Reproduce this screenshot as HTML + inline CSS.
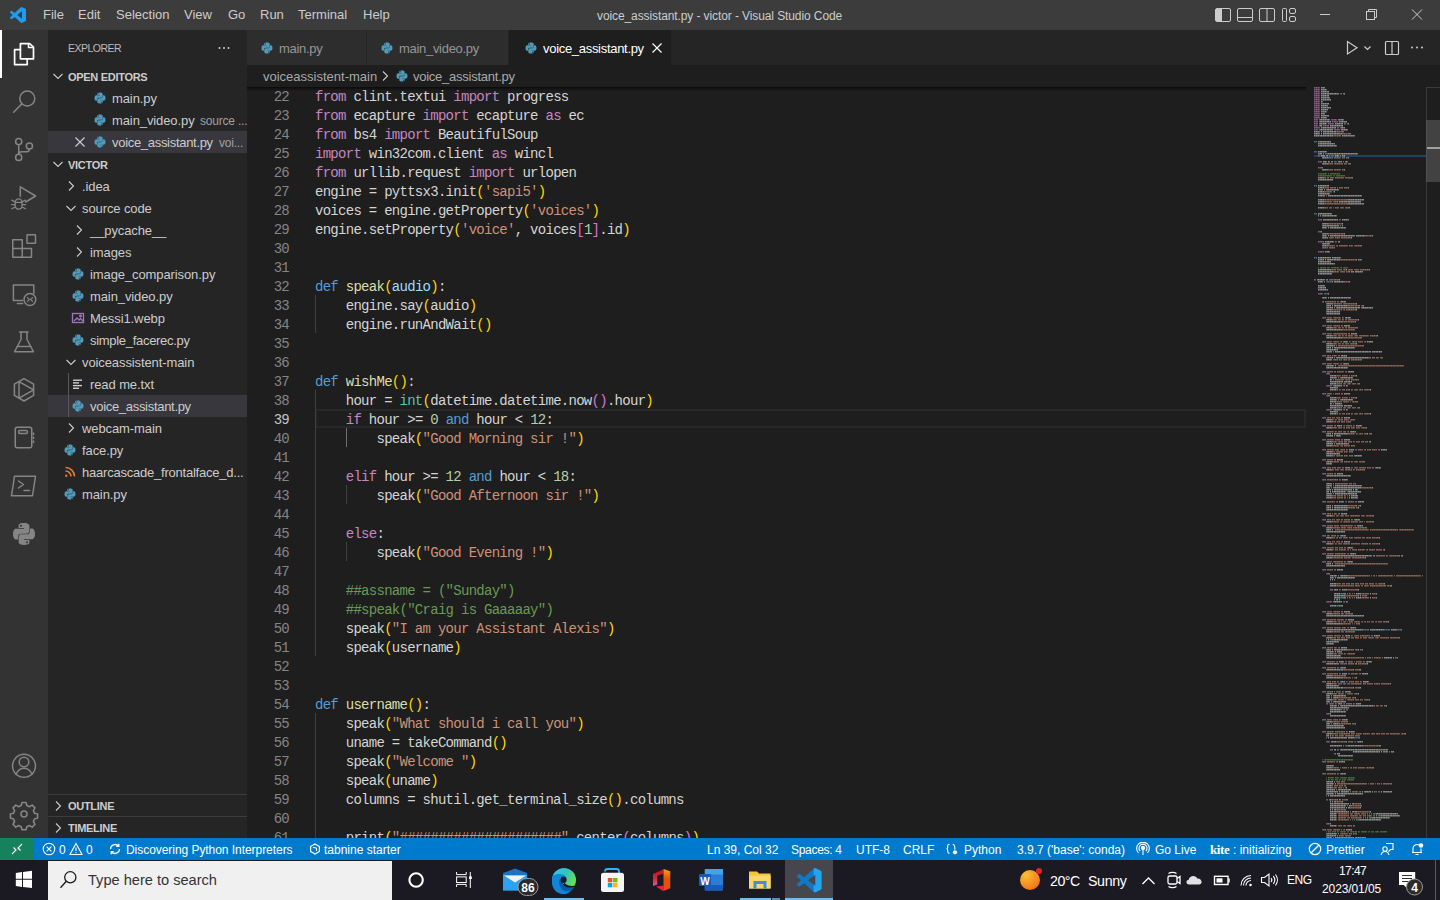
<!DOCTYPE html>
<html><head><meta charset="utf-8">
<style>
*{margin:0;padding:0;box-sizing:border-box}
html,body{width:1440px;height:900px;overflow:hidden;background:#1e1e1e;font-family:"Liberation Sans",sans-serif;color:#cccccc}
.abs{position:absolute}
#title{left:0;top:0;width:1440px;height:30px;background:#3c3c3c}
.menu{position:absolute;top:0;height:30px;line-height:30px;font-size:13px;color:#cccccc}
#act{left:0;top:30px;width:48px;height:808px;background:#333333}
#side{left:48px;top:30px;width:199px;height:808px;background:#252526}
#tabs{left:247px;top:30px;width:1193px;height:35px;background:#252526}
.tab{position:absolute;top:0;height:35px;letter-spacing:-0.3px;background:#2d2d2d;border-right:1px solid #252526;font-size:13px;line-height:35px;color:#969696}
#crumb{left:247px;top:65px;width:1193px;height:22px;background:#1e1e1e;font-size:13px;line-height:22px;color:#a9a9a9}
#editor{left:247px;top:87px;width:1193px;height:751px;background:#1e1e1e;overflow:hidden}
#status{left:0;top:838px;width:1440px;height:22px;background:#007acc;color:#fff;font-size:12px;line-height:22px}
#taskbar{left:0;top:860px;width:1440px;height:40px;background:#1b1a23}
.sb{position:absolute;top:0;height:22px;white-space:nowrap}
.row{position:absolute;left:0;width:199px;height:22px;line-height:22px;font-size:13px;white-space:nowrap;letter-spacing:-0.1px}
.code{position:absolute;margin-top:1.5px;left:68px;height:19px;line-height:19px;font-family:"Liberation Mono",monospace;font-size:14px;letter-spacing:-0.72px;white-space:pre;color:#d4d4d4}
.ln{position:absolute;margin-top:1.5px;left:0;width:42px;text-align:right;height:19px;line-height:19px;font-family:"Liberation Mono",monospace;font-size:14px;letter-spacing:-0.72px;color:#858585}
.k{color:#c586c0}.d{color:#569cd6}.f{color:#dcdcaa}.p{color:#9cdcfe}.s{color:#ce9178}.n{color:#b5cea8}.t{color:#4ec9b0}.b1{color:#ffd700}.b2{color:#da70d6}.c{color:#6a9955}
</style></head><body>
<div id="title" class="abs">
<svg class="abs" style="left:10px;top:7px" width="16" height="16" viewBox="0 0 100 100"><path fill="#1f9cf0" d="M96.46 10.8L75.86.87a6.23 6.23 0 0 0-7.1 1.2L29.35 38.04 12.19 25.01a4.16 4.16 0 0 0-5.320.24L1.36 30.26a4.16 4.16 0 0 0 0 6.16L16.25 50 1.36 63.58a4.16 4.16 0 0 0 0 6.16l5.51 5a4.16 4.16 0 0 0 5.32.24l17.16-13.02 39.41 35.96a6.23 6.23 0 0 0 7.1 1.2l20.6-9.92A6.24 6.24 0 0 0 100 83.6V16.4a6.24 6.24 0 0 0-3.54-5.6zM75.02 72.7L45.11 50l29.9-22.7z"/></svg>
<div class="menu" style="left:43px">File</div>
<div class="menu" style="left:78px">Edit</div>
<div class="menu" style="left:116px">Selection</div>
<div class="menu" style="left:184px">View</div>
<div class="menu" style="left:228px">Go</div>
<div class="menu" style="left:260px">Run</div>
<div class="menu" style="left:298px">Terminal</div>
<div class="menu" style="left:363px">Help</div>
<div class="menu" style="left:597px;top:1px;font-size:12px;letter-spacing:-0.1px">voice_assistant.py - victor - Visual Studio Code</div>
<svg class="abs" style="left:1200px;top:0" width="240" height="30" viewBox="1200 0 240 30" fill="none" stroke="#cccccc" stroke-width="1">
<rect x="1215.5" y="8.5" width="15" height="13" rx="1.5"/><rect x="1216" y="9" width="6" height="12" fill="#cccccc" stroke="none"/>
<rect x="1237.5" y="8.5" width="15" height="13" rx="1.5"/><line x1="1238" y1="17.5" x2="1252" y2="17.5"/>
<rect x="1259.5" y="8.5" width="15" height="13" rx="1.5"/><line x1="1267" y1="9" x2="1267" y2="21"/>
<rect x="1282.5" y="8.5" width="4" height="13" rx="1"/><rect x="1289.5" y="8.5" width="6" height="5" rx="1.5"/><rect x="1289.5" y="16.5" width="6" height="5" rx="1.5"/>
<line x1="1320" y1="14.5" x2="1330" y2="14.5"/>
<rect x="1366.5" y="11.5" width="8" height="8"/><path d="M1368.5 11.5V9.5h8v8h-2"/>
<path d="M1412 9.5l10 10M1422 9.5l-10 10"/>
</svg>
</div>
<div id="act" class="abs">
<div class="abs" style="left:0;top:0;width:2px;height:48px;background:#ffffff"></div>
<svg class="abs" style="left:0;top:0" width="48" height="808" viewBox="0 30 48 808" fill="none" stroke="#858585" stroke-width="1.5" stroke-linejoin="round" stroke-linecap="round">
<g stroke="#ffffff">
<path stroke-width="1.7" d="M20.4 43.6h9.2l3.9 3.6v11.6h-13.1z"/><path stroke-width="1.5" d="M28.5 43.8v3.6h4.6"/>
<path stroke-width="1.7" d="M20.4 49.6h-5.8v15h12.6v-5.8"/>
</g>
<circle cx="27.3" cy="98.5" r="7.5"/><path d="M21.9 103.9L13.6 112.2"/>
<circle cx="18.7" cy="141.6" r="3.1"/><circle cx="29.4" cy="146" r="3.1"/><circle cx="18.7" cy="157.4" r="3.1"/>
<path d="M18.7 144.7V154.3M29.4 149.1c0 1.6-1 2.6-2.6 2.6h-5c-1.6 0-3.1 1.1-3.1 2.6"/>
<path d="M20.3 186.8L35.6 196L25.6 202M20.3 186.8v9.4"/>
<path stroke-width="1.3" d="M15 202.4h7.2M15.2 202.4a3.4 3.6 0 0 1 6.8 0v3.4a3.4 3.4 0 0 1-6.8 0z M11.8 200.2l3.2 1.6M25.4 200.2l-3.2 1.6M11.6 204.6h3.6M25.6 204.6h-3.6M11.8 208.8l3.2-1.8M25.4 208.8l-3.2-1.8"/>
<path d="M12.75 239.75h9.5v8.75h9.25v8.75h-18.75zM12.75 248.5h9.5v8.75"/>
<rect x="27" y="234.75" width="8.5" height="8.5" rx="0.5"/>
<path d="M22.5 300.4H13.4v-15.4h20.4v8.2"/><path d="M17.4 303.6h5.2"/>
<circle cx="29.9" cy="299.5" r="5.9"/><path stroke-width="1.2" d="M27.4 297.6l2 1.9-2 1.9M32.6 297.6l-2 1.9 2 1.9"/>
<path d="M19.5 331.9h8.5M21 332v7.5l-6.5 12.25h19l-6.5-12.25V332M17 346.5h14"/>
<path d="M24 378.6l9.6 5.6v11.2l-9.6 5.6-9.6-5.6v-11.2z"/><path d="M19 381.6v16.6l14.6-8.4z"/>
<rect x="15.25" y="427.25" width="16.5" height="20.5" rx="2"/><rect x="18.5" y="430.5" width="9" height="3" rx="1.5"/><path d="M33.5 433v1.5M33.5 437v1.5M33.5 441v1.5"/>
<path d="M14.5 476.25h21l-3 19.5h-21z"/><path d="M18.5 481l5 3.5-5 3.5M24 490.5h5.5"/>
<circle cx="24" cy="765.8" r="11.5"/><circle cx="24" cy="762" r="4.8"/><path d="M16 774.5c1.5-4 4.5-6.3 8-6.3s6.5 2.3 8 6.3"/>
<path stroke-width="1.6" d="M22 802.5h4l.8 3 2.6 1.2 2.8-1.6 2.8 2.8-1.6 2.8 1.2 2.6 3 .8v4l-3 .8-1.2 2.6 1.6 2.8-2.8 2.8-2.8-1.6-2.6 1.2-.8 3h-4l-.8-3-2.6-1.2-2.8 1.6-2.8-2.8 1.6-2.8-1.2-2.6-3-.8v-4l3-.8 1.2-2.6-1.6-2.8 2.8-2.8 2.8 1.6 2.6-1.2z"/>
<circle cx="24" cy="814" r="3"/>
</svg>
<svg class="abs" style="left:12px;top:492px" width="24" height="24" viewBox="0 0 24 24"><path fill="#858585" d="M11.9 1c-5.6 0-5.3 2.4-5.3 2.4v2.5h5.4v.8H4.5S1 6.3 1 12s3.1 5.5 3.1 5.5H6v-2.7s-.1-3.1 3.1-3.1h5.3s3 0 3-2.9V3.9S17.8 1 11.9 1zM9 2.7a1 1 0 1 1 0 2 1 1 0 0 1 0-2z M12.1 23c5.6 0 5.3-2.4 5.3-2.4v-2.5H12v-.8h7.5s3.5.4 3.5-5.3-3.1-5.5-3.1-5.5H18v2.7s.1 3.1-3.1 3.1H9.6s-3 0-3 2.9v4.9S6.2 23 12.1 23zm2.9-1.7a1 1 0 1 1 0-2 1 1 0 0 1 0 2z"/></svg>
</div>
<svg width="0" height="0" style="position:absolute">
<defs>
<symbol id="py" viewBox="0 0 24 24"><path fill="#519aba" d="M11.9 1c-5.6 0-5.3 2.4-5.3 2.4v2.5h5.4v.8H4.5S1 6.3 1 12s3.1 5.5 3.1 5.5H6v-2.7s-.1-3.1 3.1-3.1h5.3s3 0 3-2.9V3.9S17.8 1 11.9 1zM9 2.7a1 1 0 1 1 0 2 1 1 0 0 1 0-2z M12.1 23c5.6 0 5.3-2.4 5.3-2.4v-2.5H12v-.8h7.5s3.5.4 3.5-5.3-3.1-5.5-3.1-5.5H18v2.7s.1 3.1-3.1 3.1H9.6s-3 0-3 2.9v4.9S6.2 23 12.1 23zm2.9-1.7a1 1 0 1 1 0-2 1 1 0 0 1 0 2z"/></symbol>
<symbol id="chr" viewBox="0 0 16 16"><path fill="none" stroke="#cccccc" stroke-width="1.1" d="M6 3.5l4.5 4.5L6 12.5"/></symbol>
<symbol id="chd" viewBox="0 0 16 16"><path fill="none" stroke="#cccccc" stroke-width="1.1" d="M3.5 6l4.5 4.5L12.5 6"/></symbol>
</defs></svg>
<div id="side" class="abs"><div class="abs" style="left:20px;top:1px;height:35px;line-height:35px;font-size:10.5px;color:#bbbbbb;letter-spacing:-0.5px">EXPLORER</div>
<svg class="abs" style="left:168px;top:10px" width="16" height="16" viewBox="0 0 16 16" fill="#cccccc"><circle cx="3.5" cy="8" r="1"/><circle cx="8" cy="8" r="1"/><circle cx="12.5" cy="8" r="1"/></svg>
<div class="row" style="top:35px;"><svg class="abs" style="left:2px;top:3px" width="16" height="16"><use href="#chd"/></svg><span class="abs" style="top:1px;left:20px;font-weight:bold;font-size:11px;letter-spacing:-0.3px;">OPEN EDITORS</span></div>
<div class="row" style="top:57px;"><svg class="abs" style="left:45.5px;top:5px" width="12" height="12"><use href="#py"/></svg><span class="abs" style="top:1px;left:64px;">main.py</span></div>
<div class="row" style="top:79px;"><svg class="abs" style="left:45.5px;top:5px" width="12" height="12"><use href="#py"/></svg><span class="abs" style="top:1px;left:64px;">main_video.py</span><span class="abs" style="top:1px;left:152px;font-size:12px;color:#a0a0a0;letter-spacing:-0.2px">source ...</span></div>
<div class="row" style="top:101px;background:#37373d;"><svg class="abs" style="left:45.5px;top:5px" width="12" height="12"><use href="#py"/></svg><svg class="abs" style="left:26px;top:5px" width="12" height="12" viewBox="0 0 12 12"><path d="M1.5 1.5l9 9M10.5 1.5l-9 9" stroke="#cccccc" stroke-width="1.2"/></svg><span class="abs" style="top:1px;left:64px;letter-spacing:-0.3px">voice_assistant.py</span><span class="abs" style="top:1px;left:171px;font-size:12px;color:#a0a0a0;letter-spacing:-0.2px">voi...</span></div>
<div class="row" style="top:123px;"><svg class="abs" style="left:2px;top:3px" width="16" height="16"><use href="#chd"/></svg><span class="abs" style="top:1px;left:20px;font-weight:bold;font-size:11px;letter-spacing:-0.3px;">VICTOR</span></div>
<div class="row" style="top:145px;"><svg class="abs" style="left:15px;top:3px" width="16" height="16"><use href="#chr"/></svg><span class="abs" style="top:1px;left:34px;">.idea</span></div>
<div class="row" style="top:167px;"><svg class="abs" style="left:15px;top:3px" width="16" height="16"><use href="#chd"/></svg><span class="abs" style="top:1px;left:34px;">source code</span></div>
<div class="row" style="top:189px;"><svg class="abs" style="left:23px;top:3px" width="16" height="16"><use href="#chr"/></svg><span class="abs" style="top:1px;left:42px;">__pycache__</span></div>
<div class="row" style="top:211px;"><svg class="abs" style="left:23px;top:3px" width="16" height="16"><use href="#chr"/></svg><span class="abs" style="top:1px;left:42px;">images</span></div>
<div class="row" style="top:233px;"><svg class="abs" style="left:24px;top:5px" width="12" height="12"><use href="#py"/></svg><span class="abs" style="top:1px;left:42px;">image_comparison.py</span></div>
<div class="row" style="top:255px;"><svg class="abs" style="left:24px;top:5px" width="12" height="12"><use href="#py"/></svg><span class="abs" style="top:1px;left:42px;">main_video.py</span></div>
<div class="row" style="top:277px;"><svg class="abs" style="left:23px;top:4px" width="14" height="14" viewBox="0 0 14 14" fill="none" stroke="#a074c4" stroke-width="1.3"><rect x="1.5" y="2.5" width="11" height="9"/><path d="M3 10l3-3 2 2 1.5-1.5L12 10" /><circle cx="9.5" cy="5" r="0.8" fill="#a074c4"/></svg><span class="abs" style="top:1px;left:42px;">Messi1.webp</span></div>
<div class="row" style="top:299px;"><svg class="abs" style="left:24px;top:5px" width="12" height="12"><use href="#py"/></svg><span class="abs" style="top:1px;left:42px;letter-spacing:-0.3px">simple_facerec.py</span></div>
<div class="row" style="top:321px;"><svg class="abs" style="left:15px;top:3px" width="16" height="16"><use href="#chd"/></svg><span class="abs" style="top:1px;left:34px;">voiceassistent-main</span></div>
<div class="row" style="top:343px;"><svg class="abs" style="left:24px;top:5px" width="12" height="12" viewBox="0 0 12 12" fill="#cccccc"><rect x="1" y="1.5" width="9" height="1.4"/><rect x="1" y="4.2" width="6" height="1.4"/><rect x="1" y="6.9" width="9" height="1.4"/><rect x="1" y="9.6" width="6" height="1.4"/></svg><span class="abs" style="top:1px;left:42px;">read me.txt</span></div>
<div class="row" style="top:365px;background:#37373d;"><svg class="abs" style="left:24px;top:5px" width="12" height="12"><use href="#py"/></svg><span class="abs" style="top:1px;left:42px;letter-spacing:-0.3px">voice_assistant.py</span></div>
<div class="row" style="top:387px;"><svg class="abs" style="left:15px;top:3px" width="16" height="16"><use href="#chr"/></svg><span class="abs" style="top:1px;left:34px;">webcam-main</span></div>
<div class="row" style="top:409px;"><svg class="abs" style="left:15.5px;top:5px" width="12" height="12"><use href="#py"/></svg><span class="abs" style="top:1px;left:34px;">face.py</span></div>
<div class="row" style="top:431px;"><svg class="abs" style="left:15.5px;top:5px" width="12" height="12" viewBox="0 0 12 12" fill="none" stroke="#e37933" stroke-width="1.6"><path d="M1.5 1.5a9 9 0 0 1 9 9M1.5 5a5.5 5.5 0 0 1 5.5 5.5"/><circle cx="2.3" cy="9.7" r="1.2" fill="#e37933" stroke="none"/></svg><span class="abs" style="top:1px;left:34px;letter-spacing:-0.22px">haarcascade_frontalface_d...</span></div>
<div class="row" style="top:453px;"><svg class="abs" style="left:15.5px;top:5px" width="12" height="12"><use href="#py"/></svg><span class="abs" style="top:1px;left:34px;">main.py</span></div>
<div class="abs" style="left:20px;top:343px;width:1px;height:44px;background:#585858"></div>
<div class="abs" style="left:0;top:764px;width:199px;height:1px;background:#3c3c3c"></div>
<div class="row" style="top:765px;height:21px;line-height:21px;"><svg class="abs" style="left:2px;top:3px" width="16" height="16"><use href="#chr"/></svg><span class="abs" style="top:1px;left:20px;font-weight:bold;font-size:11px;letter-spacing:-0.3px;">OUTLINE</span></div>
<div class="abs" style="left:0;top:786px;width:199px;height:1px;background:#3c3c3c"></div>
<div class="row" style="top:787px;height:21px;line-height:21px;"><svg class="abs" style="left:2px;top:3px" width="16" height="16"><use href="#chr"/></svg><span class="abs" style="top:1px;left:20px;font-weight:bold;font-size:11px;letter-spacing:-0.3px;">TIMELINE</span></div></div>
<div id="tabs" class="abs">
<div class="tab" style="left:0;width:120px"><svg class="abs" style="left:14px;top:12px" width="12" height="12"><use href="#py"/></svg><span class="abs" style="top:1px;left:32px">main.py</span></div>
<div class="tab" style="left:120px;width:142px"><svg class="abs" style="left:14px;top:12px" width="12" height="12"><use href="#py"/></svg><span class="abs" style="top:1px;left:32px">main_video.py</span></div>
<div class="tab" style="left:262px;width:162px;background:#1e1e1e;color:#ffffff;border-right:none"><svg class="abs" style="left:16px;top:12px" width="12" height="12"><use href="#py"/></svg><span class="abs" style="top:1px;left:34px">voice_assistant.py</span>
<svg class="abs" style="left:142px;top:12px" width="12" height="12" viewBox="0 0 12 12"><path d="M1.5 1.5l9 9M10.5 1.5l-9 9" stroke="#ffffff" stroke-width="1.2"/></svg></div>
<svg class="abs" style="left:1090px;top:0" width="103" height="35" viewBox="1337 30 103 35" fill="none" stroke="#cccccc" stroke-width="1.2">
<path d="M1347.5 41.5v12.5l9.5-6.25z"/><path d="M1364.5 46.5l3 3 3-3"/>
<rect x="1385.5" y="41.5" width="13" height="13" rx="1"/><path d="M1392 41.5v13"/>
<g fill="#cccccc" stroke="none"><circle cx="1412" cy="47.5" r="1"/><circle cx="1417" cy="47.5" r="1"/><circle cx="1422" cy="47.5" r="1"/></g>
</svg>
</div>
<div id="crumb" class="abs"><span class="abs" style="top:1px;left:16px">voiceassistent-main</span>
<svg class="abs" style="left:130px;top:3px" width="16" height="16"><use href="#chr"/></svg>
<svg class="abs" style="left:149px;top:5px" width="12" height="12"><use href="#py"/></svg>
<span class="abs" style="top:1px;left:166px;letter-spacing:-0.25px">voice_assistant.py</span></div>
<div id="editor" class="abs">
<div class="abs" style="left:68px;top:322px;width:991px;height:19px;border:2px solid #282828"></div>
<div class="abs" style="left:68px;top:208px;width:1px;height:38px;background:#404040"></div>
<div class="abs" style="left:68px;top:303px;width:1px;height:266px;background:#404040"></div>
<div class="abs" style="left:99px;top:341px;width:1px;height:19px;background:#707070"></div>
<div class="abs" style="left:99px;top:398px;width:1px;height:19px;background:#404040"></div>
<div class="abs" style="left:99px;top:455px;width:1px;height:19px;background:#404040"></div>
<div class="abs" style="left:68px;top:626px;width:1px;height:133px;background:#404040"></div>
<div class="ln" style="top:-1px;color:#858585">22</div>
<div class="code" style="top:-1px"><span class="k">from</span> clint.textui <span class="k">import</span> progress</div>
<div class="ln" style="top:18px;color:#858585">23</div>
<div class="code" style="top:18px"><span class="k">from</span> ecapture <span class="k">import</span> ecapture <span class="k">as</span> ec</div>
<div class="ln" style="top:37px;color:#858585">24</div>
<div class="code" style="top:37px"><span class="k">from</span> bs4 <span class="k">import</span> BeautifulSoup</div>
<div class="ln" style="top:56px;color:#858585">25</div>
<div class="code" style="top:56px"><span class="k">import</span> win32com.client <span class="k">as</span> wincl</div>
<div class="ln" style="top:75px;color:#858585">26</div>
<div class="code" style="top:75px"><span class="k">from</span> urllib.request <span class="k">import</span> urlopen</div>
<div class="ln" style="top:94px;color:#858585">27</div>
<div class="code" style="top:94px">engine = pyttsx3.init<span class="b1">(</span><span class="s">'sapi5'</span><span class="b1">)</span></div>
<div class="ln" style="top:113px;color:#858585">28</div>
<div class="code" style="top:113px">voices = engine.getProperty<span class="b1">(</span><span class="s">'voices'</span><span class="b1">)</span></div>
<div class="ln" style="top:132px;color:#858585">29</div>
<div class="code" style="top:132px">engine.setProperty<span class="b1">(</span><span class="s">'voice'</span>, voices<span class="b2">[</span><span class="n">1</span><span class="b2">]</span>.id<span class="b1">)</span></div>
<div class="ln" style="top:151px;color:#858585">30</div>
<div class="ln" style="top:170px;color:#858585">31</div>
<div class="ln" style="top:189px;color:#858585">32</div>
<div class="code" style="top:189px"><span class="d">def</span> <span class="f">speak</span><span class="b1">(</span><span class="p">audio</span><span class="b1">)</span>:</div>
<div class="ln" style="top:208px;color:#858585">33</div>
<div class="code" style="top:208px">    engine.say<span class="b1">(</span>audio<span class="b1">)</span></div>
<div class="ln" style="top:227px;color:#858585">34</div>
<div class="code" style="top:227px">    engine.runAndWait<span class="b1">()</span></div>
<div class="ln" style="top:246px;color:#858585">35</div>
<div class="ln" style="top:265px;color:#858585">36</div>
<div class="ln" style="top:284px;color:#858585">37</div>
<div class="code" style="top:284px"><span class="d">def</span> <span class="f">wishMe</span><span class="b1">()</span>:</div>
<div class="ln" style="top:303px;color:#858585">38</div>
<div class="code" style="top:303px">    hour = <span class="t">int</span><span class="b1">(</span>datetime.datetime.now<span class="b2">()</span>.hour<span class="b1">)</span></div>
<div class="ln" style="top:322px;color:#c6c6c6">39</div>
<div class="code" style="top:322px">    <span class="k">if</span> hour &gt;= <span class="n">0</span> <span class="d">and</span> hour &lt; <span class="n">12</span>:</div>
<div class="ln" style="top:341px;color:#858585">40</div>
<div class="code" style="top:341px">        speak<span class="b1">(</span><span class="s">"Good Morning sir !"</span><span class="b1">)</span></div>
<div class="ln" style="top:360px;color:#858585">41</div>
<div class="ln" style="top:379px;color:#858585">42</div>
<div class="code" style="top:379px">    <span class="k">elif</span> hour &gt;= <span class="n">12</span> <span class="d">and</span> hour &lt; <span class="n">18</span>:</div>
<div class="ln" style="top:398px;color:#858585">43</div>
<div class="code" style="top:398px">        speak<span class="b1">(</span><span class="s">"Good Afternoon sir !"</span><span class="b1">)</span></div>
<div class="ln" style="top:417px;color:#858585">44</div>
<div class="ln" style="top:436px;color:#858585">45</div>
<div class="code" style="top:436px">    <span class="k">else</span>:</div>
<div class="ln" style="top:455px;color:#858585">46</div>
<div class="code" style="top:455px">        speak<span class="b1">(</span><span class="s">"Good Evening !"</span><span class="b1">)</span></div>
<div class="ln" style="top:474px;color:#858585">47</div>
<div class="ln" style="top:493px;color:#858585">48</div>
<div class="code" style="top:493px">    <span class="c">##assname = ("Sunday")</span></div>
<div class="ln" style="top:512px;color:#858585">49</div>
<div class="code" style="top:512px">    <span class="c">##speak("Craig is Gaaaaay")</span></div>
<div class="ln" style="top:531px;color:#858585">50</div>
<div class="code" style="top:531px">    speak<span class="b1">(</span><span class="s">"I am your Assistant Alexis"</span><span class="b1">)</span></div>
<div class="ln" style="top:550px;color:#858585">51</div>
<div class="code" style="top:550px">    speak<span class="b1">(</span>username<span class="b1">)</span></div>
<div class="ln" style="top:569px;color:#858585">52</div>
<div class="ln" style="top:588px;color:#858585">53</div>
<div class="ln" style="top:607px;color:#858585">54</div>
<div class="code" style="top:607px"><span class="d">def</span> <span class="f">username</span><span class="b1">()</span>:</div>
<div class="ln" style="top:626px;color:#858585">55</div>
<div class="code" style="top:626px">    speak<span class="b1">(</span><span class="s">"What should i call you"</span><span class="b1">)</span></div>
<div class="ln" style="top:645px;color:#858585">56</div>
<div class="code" style="top:645px">    uname = takeCommand<span class="b1">()</span></div>
<div class="ln" style="top:664px;color:#858585">57</div>
<div class="code" style="top:664px">    speak<span class="b1">(</span><span class="s">"Welcome "</span><span class="b1">)</span></div>
<div class="ln" style="top:683px;color:#858585">58</div>
<div class="code" style="top:683px">    speak<span class="b1">(</span>uname<span class="b1">)</span></div>
<div class="ln" style="top:702px;color:#858585">59</div>
<div class="code" style="top:702px">    columns = shutil.get_terminal_size<span class="b1">()</span>.columns</div>
<div class="ln" style="top:721px;color:#858585">60</div>
<div class="ln" style="top:740px;color:#858585">61</div>
<div class="code" style="top:740px">    print<span class="b1">(</span><span class="s">"#####################"</span>.center<span class="b2">(</span>columns<span class="b2">)</span><span class="b1">)</span></div>
<!--MM--><svg class="abs" style="left:1067px;top:0" width="126" height="751" viewBox="1314 87 126 751"><defs><pattern id="mmp" x="1314" y="87" width="7" height="2" patternUnits="userSpaceOnUse"><rect x="0" y="0" width="1" height="1" fill="rgb(255,255,255)"/><rect x="1" y="0" width="1" height="1" fill="rgb(183,183,183)"/><rect x="2" y="0" width="1" height="1" fill="rgb(242,242,242)"/><rect x="3" y="0" width="1" height="1" fill="rgb(204,204,204)"/><rect x="4" y="0" width="1" height="1" fill="rgb(255,255,255)"/><rect x="5" y="0" width="1" height="1" fill="rgb(173,173,173)"/><rect x="6" y="0" width="1" height="1" fill="rgb(229,229,229)"/><rect x="0" y="1" width="1" height="1" fill="rgb(127,127,127)"/><rect x="1" y="1" width="1" height="1" fill="rgb(96,96,96)"/><rect x="2" y="1" width="1" height="1" fill="rgb(140,140,140)"/><rect x="3" y="1" width="1" height="1" fill="rgb(107,107,107)"/><rect x="4" y="1" width="1" height="1" fill="rgb(127,127,127)"/><rect x="5" y="1" width="1" height="1" fill="rgb(89,89,89)"/><rect x="6" y="1" width="1" height="1" fill="rgb(122,122,122)"/></pattern><mask id="mmm" maskUnits="userSpaceOnUse" x="1314" y="87" width="126" height="751"><rect x="1314" y="87" width="126" height="751" fill="url(#mmp)"/></mask></defs><rect x="1314" y="155" width="112" height="2" fill="#22405f"/><g opacity="0.62" mask="url(#mmm)"><path fill="#c586c0" d="M1314 87h6v2h-6zM1314 89h6v2h-6zM1314 91h6v2h-6zM1314 93h6v2h-6zM1340 93h2v2h-2zM1314 95h6v2h-6zM1314 97h6v2h-6zM1314 99h6v2h-6zM1314 101h6v2h-6zM1314 103h6v2h-6zM1314 105h6v2h-6zM1314 107h6v2h-6zM1314 109h6v2h-6zM1314 111h6v2h-6zM1314 113h6v2h-6zM1314 115h6v2h-6zM1314 117h6v2h-6zM1314 119h4v2h-4zM1331 119h6v2h-6zM1314 121h4v2h-4zM1332 121h6v2h-6zM1314 123h4v2h-4zM1328 123h6v2h-6zM1344 123h2v2h-2zM1314 125h4v2h-4zM1323 125h6v2h-6zM1314 127h6v2h-6zM1337 127h2v2h-2zM1314 129h4v2h-4zM1334 129h6v2h-6zM1318 155h2v2h-2zM1318 161h4v2h-4zM1318 167h4v2h-4zM1318 219h4v2h-4zM1339 219h2v2h-2zM1318 231h3v2h-3zM1318 241h6v2h-6zM1335 241h2v2h-2zM1322 247h6v2h-6zM1318 251h6v2h-6zM1314 279h2v2h-2zM1318 293h5v2h-5zM1322 301h2v2h-2zM1337 301h2v2h-2zM1322 317h4v2h-4zM1342 317h2v2h-2zM1322 325h4v2h-4zM1341 325h2v2h-2zM1322 333h4v2h-4zM1348 333h2v2h-2zM1322 341h4v2h-4zM1340 341h2v2h-2zM1364 341h2v2h-2zM1322 355h4v2h-4zM1338 355h2v2h-2zM1322 363h4v2h-4zM1340 363h2v2h-2zM1322 371h4v2h-4zM1345 371h2v2h-2zM1326 373h3v2h-3zM1326 385h6v2h-6zM1343 385h2v2h-2zM1322 393h4v2h-4zM1341 393h2v2h-2zM1326 395h3v2h-3zM1326 409h6v2h-6zM1343 409h2v2h-2zM1322 417h4v2h-4zM1341 417h2v2h-2zM1322 425h4v2h-4zM1334 425h2v2h-2zM1353 425h2v2h-2zM1322 431h4v2h-4zM1347 431h2v2h-2zM1322 439h4v2h-4zM1341 439h2v2h-2zM1322 449h4v2h-4zM1346 449h2v2h-2zM1378 449h2v2h-2zM1322 459h4v2h-4zM1334 459h2v2h-2zM1322 467h4v2h-4zM1342 467h2v2h-2zM1372 467h2v2h-2zM1322 473h4v2h-4zM1334 473h2v2h-2zM1322 479h4v2h-4zM1339 479h2v2h-2zM1322 501h4v2h-4zM1336 501h2v2h-2zM1355 501h2v2h-2zM1322 513h4v2h-4zM1338 513h2v2h-2zM1322 519h4v2h-4zM1351 519h2v2h-2zM1322 525h4v2h-4zM1354 525h2v2h-2zM1322 535h4v2h-4zM1337 535h2v2h-2zM1322 541h4v2h-4zM1341 541h2v2h-2zM1322 547h4v2h-4zM1344 547h2v2h-2zM1322 553h4v2h-4zM1347 553h2v2h-2zM1322 561h4v2h-4zM1344 561h2v2h-2zM1322 569h4v2h-4zM1334 569h2v2h-2zM1326 573h3v2h-3zM1330 589h3v2h-3zM1339 589h2v2h-2zM1326 601h6v2h-6zM1343 601h2v2h-2zM1322 611h4v2h-4zM1341 611h2v2h-2zM1322 619h4v2h-4zM1345 619h2v2h-2zM1322 627h4v2h-4zM1347 627h2v2h-2zM1322 635h4v2h-4zM1342 635h2v2h-2zM1371 635h2v2h-2zM1322 647h4v2h-4zM1338 647h2v2h-2zM1322 661h4v2h-4zM1336 661h2v2h-2zM1363 661h2v2h-2zM1322 667h4v2h-4zM1337 667h2v2h-2zM1322 673h4v2h-4zM1339 673h2v2h-2zM1359 673h2v2h-2zM1322 681h4v2h-4zM1337 681h2v2h-2zM1360 681h2v2h-2zM1322 691h4v2h-4zM1342 691h2v2h-2zM1326 703h2v2h-2zM1335 703h2v2h-2zM1353 703h2v2h-2zM1326 713h4v2h-4zM1322 719h4v2h-4zM1339 719h2v2h-2zM1322 731h4v2h-4zM1346 731h2v2h-2zM1326 741h4v2h-4zM1354 741h2v2h-2zM1330 749h3v2h-3zM1337 749h2v2h-2zM1334 753h2v2h-2zM1322 761h4v2h-4zM1336 761h2v2h-2zM1322 773h4v2h-4zM1337 773h2v2h-2zM1326 799h2v2h-2zM1326 823h4v2h-4zM1322 829h4v2h-4zM1343 829h2v2h-2z"/><path fill="#d4d4d4" d="M1321 87h4v2h-4zM1321 89h6v2h-6zM1321 91h8v2h-8zM1321 93h18v2h-18zM1343 93h2v2h-2zM1321 95h8v2h-8zM1321 97h9v2h-9zM1321 99h10v2h-10zM1321 101h2v2h-2zM1321 103h8v2h-8zM1321 105h7v2h-7zM1321 107h10v2h-10zM1321 109h7v2h-7zM1321 111h6v2h-6zM1321 113h4v2h-4zM1321 115h8v2h-8zM1321 117h6v2h-6zM1319 119h11v2h-11zM1338 119h6v2h-6zM1319 121h12v2h-12zM1339 121h8v2h-8zM1319 123h8v2h-8zM1335 123h8v2h-8zM1347 123h2v2h-2zM1319 125h3v2h-3zM1330 125h13v2h-13zM1321 127h15v2h-15zM1340 127h5v2h-5zM1319 129h14v2h-14zM1341 129h7v2h-7zM1314 131h6v2h-6zM1321 131h1v2h-1zM1323 131h13v2h-13zM1343 131h1v2h-1zM1314 133h6v2h-6zM1321 133h1v2h-1zM1323 133h19v2h-19zM1350 133h1v2h-1zM1314 135h19v2h-19zM1340 135h1v2h-1zM1342 135h7v2h-7zM1350 135h5v2h-5zM1323 141h8v2h-8zM1318 143h17v2h-17zM1318 145h19v2h-19zM1324 151h3v2h-3zM1318 153h4v2h-4zM1323 153h1v2h-1zM1328 153h30v2h-30zM1321 155h4v2h-4zM1326 155h2v2h-2zM1335 155h4v2h-4zM1340 155h1v2h-1zM1344 155h1v2h-1zM1322 157h6v2h-6zM1348 157h1v2h-1zM1323 161h4v2h-4zM1328 161h2v2h-2zM1338 161h4v2h-4zM1343 161h1v2h-1zM1347 161h1v2h-1zM1322 163h6v2h-6zM1350 163h1v2h-1zM1322 167h1v2h-1zM1322 169h6v2h-6zM1344 169h1v2h-1zM1318 177h6v2h-6zM1352 177h1v2h-1zM1318 179h15v2h-15zM1326 185h3v2h-3zM1318 187h6v2h-6zM1348 187h1v2h-1zM1318 189h5v2h-5zM1324 189h1v2h-1zM1326 189h13v2h-13zM1318 191h6v2h-6zM1334 191h1v2h-1zM1318 193h12v2h-12zM1318 195h7v2h-7zM1326 195h1v2h-1zM1328 195h34v2h-34zM1318 199h6v2h-6zM1347 199h17v2h-17zM1318 201h6v2h-6zM1337 201h1v2h-1zM1339 201h22v2h-22zM1318 203h6v2h-6zM1347 203h17v2h-17zM1318 207h6v2h-6zM1349 207h1v2h-1zM1329 213h3v2h-3zM1318 215h1v2h-1zM1320 215h1v2h-1zM1322 215h15v2h-15zM1323 219h15v2h-15zM1342 219h7v2h-7zM1322 223h6v2h-6zM1342 223h1v2h-1zM1322 225h17v2h-17zM1340 225h1v2h-1zM1322 227h5v2h-5zM1328 227h1v2h-1zM1330 227h16v2h-16zM1321 231h1v2h-1zM1322 233h6v2h-6zM1344 233h1v2h-1zM1322 235h5v2h-5zM1328 235h1v2h-1zM1330 235h25v2h-25zM1356 235h9v2h-9zM1372 235h1v2h-1zM1322 237h6v2h-6zM1351 237h1v2h-1zM1325 241h9v2h-9zM1338 241h2v2h-2zM1322 243h8v2h-8zM1322 245h6v2h-6zM1361 245h1v2h-1zM1325 251h5v2h-5zM1327 257h4v2h-4zM1332 257h9v2h-9zM1318 259h6v2h-6zM1325 259h1v2h-1zM1327 259h13v2h-13zM1356 259h1v2h-1zM1361 259h1v2h-1zM1318 261h13v2h-13zM1318 263h17v2h-17zM1318 269h13v2h-13zM1346 269h1v2h-1zM1369 269h1v2h-1zM1318 271h16v2h-16zM1349 271h1v2h-1zM1351 271h3v2h-3zM1355 271h8v2h-8zM1318 273h14v2h-14zM1317 279h8v2h-8zM1326 279h2v2h-2zM1339 279h1v2h-1zM1318 281h5v2h-5zM1324 281h1v2h-1zM1332 281h1v2h-1zM1334 281h10v2h-10zM1349 281h1v2h-1zM1318 285h7v2h-7zM1318 287h8v2h-8zM1318 289h10v2h-10zM1328 293h1v2h-1zM1322 297h5v2h-5zM1328 297h1v2h-1zM1330 297h21v2h-21zM1340 301h6v2h-6zM1326 303h6v2h-6zM1356 303h1v2h-1zM1326 305h5v2h-5zM1332 305h1v2h-1zM1334 305h14v2h-14zM1359 305h1v2h-1zM1363 305h1v2h-1zM1326 307h7v2h-7zM1334 307h1v2h-1zM1336 307h24v2h-24zM1361 307h10v2h-10zM1372 307h1v2h-1zM1326 309h6v2h-6zM1356 309h1v2h-1zM1326 311h14v2h-14zM1326 313h14v2h-14zM1345 317h6v2h-6zM1326 319h6v2h-6zM1358 319h1v2h-1zM1326 321h16v2h-16zM1355 321h1v2h-1zM1344 325h6v2h-6zM1326 327h6v2h-6zM1357 327h1v2h-1zM1326 329h16v2h-16zM1354 329h1v2h-1zM1351 333h6v2h-6zM1326 335h6v2h-6zM1377 335h1v2h-1zM1326 337h16v2h-16zM1361 337h1v2h-1zM1343 341h5v2h-5zM1367 341h6v2h-6zM1326 343h6v2h-6zM1356 343h1v2h-1zM1326 345h9v2h-9zM1336 345h1v2h-1zM1326 347h5v2h-5zM1332 347h1v2h-1zM1334 347h21v2h-21zM1326 349h12v2h-12zM1326 351h6v2h-6zM1333 351h1v2h-1zM1335 351h36v2h-36zM1372 351h6v2h-6zM1379 351h3v2h-3zM1341 355h6v2h-6zM1326 357h7v2h-7zM1334 357h1v2h-1zM1336 357h33v2h-33zM1382 357h1v2h-1zM1326 359h6v2h-6zM1361 359h1v2h-1zM1343 363h6v2h-6zM1326 365h8v2h-8zM1335 365h1v2h-1zM1326 367h22v2h-22zM1348 371h6v2h-6zM1329 373h1v2h-1zM1330 375h6v2h-6zM1356 375h1v2h-1zM1330 377h7v2h-7zM1338 377h1v2h-1zM1340 377h13v2h-13zM1330 379h2v2h-2zM1333 379h1v2h-1zM1330 381h13v2h-13zM1344 381h8v2h-8zM1330 383h6v2h-6zM1359 383h1v2h-1zM1333 385h9v2h-9zM1346 385h2v2h-2zM1330 387h8v2h-8zM1330 389h6v2h-6zM1370 389h1v2h-1zM1344 393h6v2h-6zM1329 395h1v2h-1zM1330 397h6v2h-6zM1356 397h1v2h-1zM1330 399h7v2h-7zM1338 399h1v2h-1zM1340 399h13v2h-13zM1330 401h6v2h-6zM1357 401h1v2h-1zM1330 403h2v2h-2zM1333 403h1v2h-1zM1335 403h7v2h-7zM1330 405h13v2h-13zM1344 405h8v2h-8zM1330 407h6v2h-6zM1359 407h1v2h-1zM1333 409h9v2h-9zM1346 409h2v2h-2zM1330 411h8v2h-8zM1330 413h6v2h-6zM1370 413h1v2h-1zM1344 417h6v2h-6zM1326 419h6v2h-6zM1354 419h1v2h-1zM1326 421h6v2h-6zM1350 421h1v2h-1zM1337 425h5v2h-5zM1356 425h6v2h-6zM1326 427h6v2h-6zM1366 427h1v2h-1zM1350 431h6v2h-6zM1326 433h5v2h-5zM1332 433h1v2h-1zM1334 433h14v2h-14zM1367 433h1v2h-1zM1371 433h1v2h-1zM1326 435h7v2h-7zM1334 435h1v2h-1zM1336 435h5v2h-5zM1344 439h6v2h-6zM1326 441h6v2h-6zM1370 441h1v2h-1zM1326 443h7v2h-7zM1334 443h1v2h-1zM1336 443h13v2h-13zM1326 445h6v2h-6zM1354 445h1v2h-1zM1349 449h5v2h-5zM1381 449h6v2h-6zM1326 451h6v2h-6zM1352 451h1v2h-1zM1326 453h14v2h-14zM1326 455h6v2h-6zM1352 455h1v2h-1zM1354 455h8v2h-8zM1337 459h6v2h-6zM1326 461h6v2h-6zM1364 461h1v2h-1zM1326 463h6v2h-6zM1345 467h5v2h-5zM1375 467h6v2h-6zM1326 469h6v2h-6zM1364 469h1v2h-1zM1337 473h6v2h-6zM1326 475h25v2h-25zM1342 479h6v2h-6zM1326 483h6v2h-6zM1333 483h1v2h-1zM1326 485h6v2h-6zM1333 485h1v2h-1zM1335 485h27v2h-27zM1326 487h4v2h-4zM1331 487h1v2h-1zM1333 487h28v2h-28zM1372 487h1v2h-1zM1326 489h5v2h-5zM1332 489h1v2h-1zM1334 489h18v2h-18zM1353 489h1v2h-1zM1356 489h2v2h-2zM1326 491h3v2h-3zM1330 491h1v2h-1zM1332 491h13v2h-13zM1348 491h13v2h-13zM1326 493h6v2h-6zM1333 493h1v2h-1zM1335 493h22v2h-22zM1326 495h6v2h-6zM1349 495h1v2h-1zM1351 495h7v2h-7zM1326 497h6v2h-6zM1349 497h1v2h-1zM1351 497h7v2h-7zM1339 501h5v2h-5zM1358 501h6v2h-6zM1326 505h5v2h-5zM1332 505h1v2h-1zM1334 505h14v2h-14zM1356 505h1v2h-1zM1360 505h1v2h-1zM1326 507h5v2h-5zM1332 507h1v2h-1zM1334 507h14v2h-14zM1354 507h1v2h-1zM1358 507h1v2h-1zM1326 509h22v2h-22zM1341 513h6v2h-6zM1326 515h6v2h-6zM1373 515h1v2h-1zM1354 519h6v2h-6zM1326 521h6v2h-6zM1373 521h1v2h-1zM1357 525h6v2h-6zM1326 527h6v2h-6zM1366 527h1v2h-1zM1326 529h5v2h-5zM1332 529h1v2h-1zM1326 531h19v2h-19zM1340 535h6v2h-6zM1326 537h6v2h-6zM1379 537h1v2h-1zM1344 541h6v2h-6zM1326 543h6v2h-6zM1379 543h1v2h-1zM1347 547h6v2h-6zM1326 549h6v2h-6zM1384 549h1v2h-1zM1350 553h6v2h-6zM1326 555h43v2h-43zM1371 555h1v2h-1zM1374 555h1v2h-1zM1399 555h1v2h-1zM1402 555h1v2h-1zM1326 557h6v2h-6zM1365 557h1v2h-1zM1347 561h6v2h-6zM1326 563h5v2h-5zM1332 563h1v2h-1zM1326 565h19v2h-19zM1337 569h6v2h-6zM1329 573h1v2h-1zM1330 575h7v2h-7zM1338 575h1v2h-1zM1340 575h8v2h-8zM1330 577h4v2h-4zM1335 577h1v2h-1zM1337 577h18v2h-18zM1330 579h1v2h-1zM1332 579h1v2h-1zM1330 583h6v2h-6zM1384 583h1v2h-1zM1330 585h6v2h-6zM1385 585h1v2h-1zM1391 585h1v2h-1zM1334 589h4v2h-4zM1342 589h5v2h-5zM1357 589h2v2h-2zM1334 593h6v2h-6zM1343 593h3v2h-3zM1347 593h1v2h-1zM1354 593h1v2h-1zM1356 593h5v2h-5zM1368 593h1v2h-1zM1370 593h1v2h-1zM1376 593h1v2h-1zM1334 595h11v2h-11zM1358 595h1v2h-1zM1360 595h1v2h-1zM1366 595h1v2h-1zM1334 597h6v2h-6zM1343 597h3v2h-3zM1347 597h1v2h-1zM1354 597h1v2h-1zM1356 597h5v2h-5zM1368 597h1v2h-1zM1370 597h1v2h-1zM1376 597h1v2h-1zM1334 599h1v2h-1zM1336 599h2v2h-2zM1333 601h9v2h-9zM1346 601h2v2h-2zM1330 605h6v2h-6zM1339 605h4v2h-4zM1344 611h6v2h-6zM1326 613h6v2h-6zM1352 613h1v2h-1zM1326 615h38v2h-38zM1348 619h6v2h-6zM1326 621h6v2h-6zM1388 621h1v2h-1zM1326 623h16v2h-16zM1359 623h1v2h-1zM1350 627h6v2h-6zM1326 629h37v2h-37zM1368 629h1v2h-1zM1370 629h14v2h-14zM1389 629h1v2h-1zM1391 629h6v2h-6zM1401 629h1v2h-1zM1326 631h6v2h-6zM1354 631h1v2h-1zM1345 635h5v2h-5zM1374 635h6v2h-6zM1326 637h6v2h-6zM1399 637h1v2h-1zM1326 639h1v2h-1zM1328 639h1v2h-1zM1333 639h15v2h-15zM1326 641h13v2h-13zM1326 643h8v2h-8zM1341 647h6v2h-6zM1326 649h5v2h-5zM1332 649h1v2h-1zM1334 649h14v2h-14zM1358 649h1v2h-1zM1362 649h1v2h-1zM1326 651h8v2h-8zM1335 651h1v2h-1zM1337 651h5v2h-5zM1326 653h6v2h-6zM1354 653h1v2h-1zM1326 655h15v2h-15zM1326 657h16v2h-16zM1382 657h1v2h-1zM1384 657h8v2h-8zM1393 657h1v2h-1zM1397 657h1v2h-1zM1339 661h5v2h-5zM1366 661h6v2h-6zM1326 663h11v2h-11zM1338 663h1v2h-1zM1356 663h1v2h-1zM1367 663h1v2h-1zM1340 667h6v2h-6zM1326 669h17v2h-17zM1353 669h1v2h-1zM1359 669h2v2h-2zM1342 673h5v2h-5zM1362 673h6v2h-6zM1326 675h6v2h-6zM1345 675h1v2h-1zM1326 677h16v2h-16zM1356 677h1v2h-1zM1340 681h5v2h-5zM1363 681h6v2h-6zM1326 683h6v2h-6zM1390 683h1v2h-1zM1326 685h11v2h-11zM1338 685h1v2h-1zM1326 687h17v2h-17zM1353 687h1v2h-1zM1359 687h2v2h-2zM1345 691h6v2h-6zM1326 693h6v2h-6zM1358 693h1v2h-1zM1326 695h4v2h-4zM1331 695h1v2h-1zM1333 695h13v2h-13zM1326 697h4v2h-4zM1331 697h1v2h-1zM1333 697h5v2h-5zM1350 697h1v2h-1zM1355 697h1v2h-1zM1326 699h6v2h-6zM1369 699h1v2h-1zM1326 701h4v2h-4zM1331 701h1v2h-1zM1333 701h13v2h-13zM1338 703h4v2h-4zM1356 703h5v2h-5zM1330 705h7v2h-7zM1338 705h1v2h-1zM1340 705h33v2h-33zM1386 705h1v2h-1zM1330 707h19v2h-19zM1330 709h11v2h-11zM1347 709h1v2h-1zM1330 711h16v2h-16zM1330 713h1v2h-1zM1330 715h16v2h-16zM1342 719h6v2h-6zM1326 721h6v2h-6zM1347 721h1v2h-1zM1326 723h4v2h-4zM1331 723h1v2h-1zM1333 723h5v2h-5zM1350 723h1v2h-1zM1355 723h1v2h-1zM1326 725h18v2h-18zM1326 727h16v2h-16zM1343 727h2v2h-2zM1349 731h6v2h-6zM1326 733h6v2h-6zM1405 733h1v2h-1zM1326 735h3v2h-3zM1330 735h1v2h-1zM1326 737h1v2h-1zM1328 737h1v2h-1zM1330 737h17v2h-17zM1348 737h7v2h-7zM1359 737h1v2h-1zM1331 741h5v2h-5zM1346 741h1v2h-1zM1352 741h1v2h-1zM1357 741h6v2h-6zM1330 745h12v2h-12zM1343 745h1v2h-1zM1348 745h15v2h-15zM1379 745h2v2h-2zM1334 749h2v2h-2zM1340 749h39v2h-39zM1386 749h2v2h-2zM1353 751h27v2h-27zM1381 751h1v2h-1zM1387 751h1v2h-1zM1389 751h1v2h-1zM1392 751h2v2h-2zM1337 753h3v2h-3zM1338 755h15v2h-15zM1339 761h6v2h-6zM1326 765h8v2h-8zM1326 767h6v2h-6zM1373 767h1v2h-1zM1326 769h14v2h-14zM1340 773h6v2h-6zM1326 781h7v2h-7zM1334 781h1v2h-1zM1326 783h8v2h-8zM1335 783h1v2h-1zM1326 785h6v2h-6zM1345 785h1v2h-1zM1326 787h6v2h-6zM1346 787h1v2h-1zM1326 789h9v2h-9zM1336 789h1v2h-1zM1338 789h13v2h-13zM1326 791h12v2h-12zM1339 791h1v2h-1zM1341 791h8v2h-8zM1350 791h1v2h-1zM1362 791h1v2h-1zM1364 791h7v2h-7zM1372 791h1v2h-1zM1381 791h1v2h-1zM1383 791h9v2h-9zM1326 793h8v2h-8zM1335 793h1v2h-1zM1337 793h26v2h-26zM1326 795h1v2h-1zM1328 795h1v2h-1zM1330 795h15v2h-15zM1329 799h2v2h-2zM1337 799h1v2h-1zM1339 799h2v2h-2zM1347 799h1v2h-1zM1330 801h1v2h-1zM1332 801h1v2h-1zM1334 801h2v2h-2zM1342 801h1v2h-1zM1330 803h19v2h-19zM1350 803h1v2h-1zM1352 803h2v2h-2zM1360 803h1v2h-1zM1330 805h16v2h-16zM1347 805h1v2h-1zM1349 805h2v2h-2zM1361 805h1v2h-1zM1330 807h15v2h-15zM1346 807h1v2h-1zM1348 807h2v2h-2zM1360 807h1v2h-1zM1330 809h1v2h-1zM1332 809h1v2h-1zM1334 809h2v2h-2zM1345 809h1v2h-1zM1330 811h19v2h-19zM1350 811h1v2h-1zM1352 811h2v2h-2zM1355 811h2v2h-2zM1370 811h1v2h-1zM1330 813h6v2h-6zM1371 813h1v2h-1zM1376 813h22v2h-22zM1330 815h6v2h-6zM1376 815h1v2h-1zM1381 815h19v2h-19zM1330 817h6v2h-6zM1367 817h1v2h-1zM1372 817h18v2h-18zM1330 819h6v2h-6zM1354 819h1v2h-1zM1359 819h22v2h-22zM1330 823h1v2h-1zM1330 825h6v2h-6zM1354 825h1v2h-1zM1346 829h6v2h-6zM1326 833h11v2h-11zM1338 833h1v2h-1zM1326 835h10v2h-10zM1337 835h1v2h-1zM1326 837h6v2h-6zM1333 837h1v2h-1zM1335 837h19v2h-19zM1355 837h11v2h-11z"/><path fill="#ce9178" d="M1336 131h7v2h-7zM1342 133h8v2h-8zM1333 135h7v2h-7zM1328 157h5v2h-5zM1334 157h7v2h-7zM1342 157h3v2h-3zM1346 157h2v2h-2zM1328 163h5v2h-5zM1334 163h9v2h-9zM1344 163h3v2h-3zM1348 163h2v2h-2zM1328 169h5v2h-5zM1334 169h7v2h-7zM1342 169h2v2h-2zM1324 177h2v2h-2zM1327 177h2v2h-2zM1330 177h4v2h-4zM1335 177h9v2h-9zM1345 177h7v2h-7zM1324 187h5v2h-5zM1330 187h6v2h-6zM1337 187h1v2h-1zM1339 187h4v2h-4zM1344 187h4v2h-4zM1324 191h8v2h-8zM1333 191h1v2h-1zM1324 199h23v2h-23zM1324 201h8v2h-8zM1333 201h4v2h-4zM1324 203h23v2h-23zM1324 207h4v2h-4zM1329 207h3v2h-3zM1333 207h1v2h-1zM1335 207h4v2h-4zM1340 207h4v2h-4zM1345 207h4v2h-4zM1328 223h14v2h-14zM1328 233h16v2h-16zM1365 235h7v2h-7zM1329 237h5v2h-5zM1335 237h5v2h-5zM1341 237h10v2h-10zM1328 245h7v2h-7zM1336 245h2v2h-2zM1339 245h9v2h-9zM1349 245h4v2h-4zM1354 245h7v2h-7zM1329 247h6v2h-6zM1340 259h16v2h-16zM1331 269h5v2h-5zM1337 269h5v2h-5zM1343 269h3v2h-3zM1348 269h5v2h-5zM1354 269h5v2h-5zM1360 269h9v2h-9zM1334 271h5v2h-5zM1340 271h5v2h-5zM1346 271h3v2h-3zM1329 279h10v2h-10zM1344 281h5v2h-5zM1325 301h11v2h-11zM1332 303h10v2h-10zM1343 303h13v2h-13zM1348 305h11v2h-11zM1361 305h2v2h-2zM1332 309h10v2h-10zM1343 309h2v2h-2zM1346 309h10v2h-10zM1327 317h5v2h-5zM1333 317h8v2h-8zM1332 319h5v2h-5zM1338 319h3v2h-3zM1342 319h2v2h-2zM1345 319h2v2h-2zM1348 319h10v2h-10zM1342 321h13v2h-13zM1327 325h5v2h-5zM1333 325h7v2h-7zM1332 327h5v2h-5zM1338 327h3v2h-3zM1342 327h2v2h-2zM1345 327h2v2h-2zM1348 327h9v2h-9zM1342 329h12v2h-12zM1327 333h5v2h-5zM1333 333h14v2h-14zM1332 335h5v2h-5zM1338 335h3v2h-3zM1342 335h2v2h-2zM1345 335h2v2h-2zM1348 335h5v2h-5zM1354 335h4v2h-4zM1359 335h10v2h-10zM1370 335h7v2h-7zM1342 337h19v2h-19zM1327 341h5v2h-5zM1333 341h6v2h-6zM1352 341h5v2h-5zM1358 341h5v2h-5zM1332 343h5v2h-5zM1338 343h3v2h-3zM1342 343h2v2h-2zM1345 343h4v2h-4zM1350 343h6v2h-6zM1338 345h26v2h-26zM1327 355h4v2h-4zM1332 355h5v2h-5zM1369 357h2v2h-2zM1372 357h3v2h-3zM1376 357h3v2h-3zM1380 357h2v2h-2zM1333 359h5v2h-5zM1339 359h3v2h-3zM1343 359h4v2h-4zM1348 359h2v2h-2zM1351 359h10v2h-10zM1327 363h5v2h-5zM1333 363h6v2h-6zM1338 365h66v2h-66zM1327 371h6v2h-6zM1334 371h2v2h-2zM1337 371h7v2h-7zM1336 375h5v2h-5zM1342 375h6v2h-6zM1349 375h1v2h-1zM1351 375h5v2h-5zM1335 379h9v2h-9zM1345 379h5v2h-5zM1351 379h8v2h-8zM1336 383h6v2h-6zM1343 383h3v2h-3zM1347 383h4v2h-4zM1352 383h4v2h-4zM1357 383h2v2h-2zM1336 389h2v2h-2zM1339 389h2v2h-2zM1342 389h3v2h-3zM1346 389h4v2h-4zM1351 389h2v2h-2zM1354 389h4v2h-4zM1359 389h4v2h-4zM1364 389h6v2h-6zM1327 393h5v2h-5zM1333 393h1v2h-1zM1335 393h5v2h-5zM1336 397h5v2h-5zM1342 397h6v2h-6zM1349 397h1v2h-1zM1351 397h5v2h-5zM1336 401h6v2h-6zM1343 401h6v2h-6zM1350 401h1v2h-1zM1352 401h5v2h-5zM1336 407h6v2h-6zM1343 407h3v2h-3zM1347 407h4v2h-4zM1352 407h4v2h-4zM1357 407h2v2h-2zM1336 413h2v2h-2zM1339 413h2v2h-2zM1342 413h3v2h-3zM1346 413h4v2h-4zM1351 413h2v2h-2zM1354 413h4v2h-4zM1359 413h4v2h-4zM1364 413h6v2h-6zM1327 417h4v2h-4zM1332 417h3v2h-3zM1336 417h4v2h-4zM1332 419h2v2h-2zM1335 419h2v2h-2zM1338 419h5v2h-5zM1344 419h5v2h-5zM1350 419h4v2h-4zM1332 421h4v2h-4zM1337 421h3v2h-3zM1341 421h4v2h-4zM1346 421h4v2h-4zM1327 425h6v2h-6zM1346 425h6v2h-6zM1332 427h5v2h-5zM1338 427h4v2h-4zM1343 427h2v2h-2zM1346 427h4v2h-4zM1351 427h4v2h-4zM1356 427h4v2h-4zM1361 427h5v2h-5zM1327 431h7v2h-7zM1335 431h2v2h-2zM1338 431h4v2h-4zM1343 431h3v2h-3zM1348 433h7v2h-7zM1356 433h2v2h-2zM1359 433h4v2h-4zM1364 433h3v2h-3zM1369 433h2v2h-2zM1327 439h7v2h-7zM1335 439h5v2h-5zM1332 441h5v2h-5zM1338 441h5v2h-5zM1344 441h3v2h-3zM1348 441h4v2h-4zM1353 441h2v2h-2zM1356 441h4v2h-4zM1361 441h3v2h-3zM1365 441h3v2h-3zM1369 441h1v2h-1zM1332 445h7v2h-7zM1340 445h3v2h-3zM1344 445h6v2h-6zM1351 445h3v2h-3zM1327 449h7v2h-7zM1335 449h4v2h-4zM1340 449h5v2h-5zM1358 449h5v2h-5zM1364 449h2v2h-2zM1367 449h4v2h-4zM1372 449h5v2h-5zM1332 451h3v2h-3zM1336 451h7v2h-7zM1344 451h4v2h-4zM1349 451h3v2h-3zM1332 455h3v2h-3zM1336 455h7v2h-7zM1344 455h4v2h-4zM1349 455h3v2h-3zM1327 459h6v2h-6zM1332 461h7v2h-7zM1340 461h3v2h-3zM1344 461h6v2h-6zM1351 461h2v2h-2zM1354 461h4v2h-4zM1359 461h5v2h-5zM1327 467h4v2h-4zM1332 467h4v2h-4zM1337 467h4v2h-4zM1354 467h4v2h-4zM1359 467h7v2h-7zM1367 467h4v2h-4zM1332 469h2v2h-2zM1335 469h4v2h-4zM1340 469h4v2h-4zM1345 469h7v2h-7zM1353 469h2v2h-2zM1356 469h8v2h-8zM1327 473h6v2h-6zM1327 479h11v2h-11zM1335 483h13v2h-13zM1349 483h3v2h-3zM1353 483h3v2h-3zM1361 487h11v2h-11zM1345 491h1v2h-1zM1347 491h1v2h-1zM1332 495h4v2h-4zM1337 495h6v2h-6zM1344 495h2v2h-2zM1347 495h1v2h-1zM1332 497h4v2h-4zM1337 497h6v2h-6zM1344 497h2v2h-2zM1347 497h1v2h-1zM1327 501h8v2h-8zM1348 501h6v2h-6zM1348 505h8v2h-8zM1358 505h2v2h-2zM1348 507h6v2h-6zM1356 507h2v2h-2zM1327 513h4v2h-4zM1332 513h1v2h-1zM1334 513h3v2h-3zM1332 515h3v2h-3zM1336 515h3v2h-3zM1340 515h4v2h-4zM1345 515h4v2h-4zM1350 515h10v2h-10zM1361 515h4v2h-4zM1366 515h7v2h-7zM1327 519h4v2h-4zM1332 519h3v2h-3zM1336 519h4v2h-4zM1341 519h2v2h-2zM1344 519h6v2h-6zM1332 521h7v2h-7zM1340 521h2v2h-2zM1343 521h7v2h-7zM1351 521h7v2h-7zM1359 521h4v2h-4zM1364 521h1v2h-1zM1366 521h7v2h-7zM1327 525h6v2h-6zM1334 525h5v2h-5zM1340 525h13v2h-13zM1332 527h8v2h-8zM1341 527h5v2h-5zM1347 527h5v2h-5zM1353 527h13v2h-13zM1335 529h34v2h-34zM1370 529h28v2h-28zM1399 529h15v2h-15zM1327 535h3v2h-3zM1331 535h5v2h-5zM1332 537h3v2h-3zM1336 537h2v2h-2zM1339 537h3v2h-3zM1343 537h5v2h-5zM1349 537h4v2h-4zM1354 537h7v2h-7zM1362 537h3v2h-3zM1366 537h5v2h-5zM1372 537h7v2h-7zM1327 541h4v2h-4zM1332 541h3v2h-3zM1336 541h4v2h-4zM1332 543h2v2h-2zM1335 543h2v2h-2zM1338 543h4v2h-4zM1343 543h7v2h-7zM1351 543h9v2h-9zM1361 543h7v2h-7zM1369 543h2v2h-2zM1372 543h7v2h-7zM1327 547h7v2h-7zM1335 547h3v2h-3zM1339 547h4v2h-4zM1332 549h2v2h-2zM1335 549h3v2h-3zM1339 549h7v2h-7zM1347 549h2v2h-2zM1350 549h1v2h-1zM1352 549h5v2h-5zM1358 549h7v2h-7zM1366 549h2v2h-2zM1369 549h6v2h-6zM1376 549h6v2h-6zM1383 549h1v2h-1zM1327 553h7v2h-7zM1335 553h11v2h-11zM1376 555h9v2h-9zM1386 555h2v2h-2zM1389 555h10v2h-10zM1332 557h11v2h-11zM1344 557h7v2h-7zM1352 557h13v2h-13zM1327 561h5v2h-5zM1333 561h10v2h-10zM1335 563h53v2h-53zM1327 569h6v2h-6zM1348 575h22v2h-22zM1371 575h1v2h-1zM1373 575h2v2h-2zM1376 575h1v2h-1zM1378 575h15v2h-15zM1394 575h1v2h-1zM1396 575h25v2h-25zM1422 575h1v2h-1zM1336 583h5v2h-5zM1342 583h3v2h-3zM1346 583h4v2h-4zM1351 583h3v2h-3zM1355 583h4v2h-4zM1360 583h4v2h-4zM1365 583h3v2h-3zM1369 583h5v2h-5zM1375 583h2v2h-2zM1378 583h6v2h-6zM1336 585h18v2h-18zM1355 585h5v2h-5zM1361 585h2v2h-2zM1364 585h5v2h-5zM1370 585h15v2h-15zM1387 585h4v2h-4zM1347 589h10v2h-10zM1349 593h2v2h-2zM1352 593h1v2h-1zM1361 593h7v2h-7zM1372 593h4v2h-4zM1345 595h13v2h-13zM1362 595h4v2h-4zM1349 597h2v2h-2zM1352 597h1v2h-1zM1361 597h7v2h-7zM1372 597h4v2h-4zM1327 611h5v2h-5zM1333 611h7v2h-7zM1332 613h8v2h-8zM1341 613h3v2h-3zM1345 613h7v2h-7zM1327 619h9v2h-9zM1337 619h7v2h-7zM1332 621h5v2h-5zM1338 621h2v2h-2zM1341 621h1v2h-1zM1343 621h3v2h-3zM1347 621h1v2h-1zM1349 621h4v2h-4zM1354 621h6v2h-6zM1361 621h2v2h-2zM1364 621h2v2h-2zM1367 621h3v2h-3zM1371 621h3v2h-3zM1375 621h2v2h-2zM1378 621h4v2h-4zM1383 621h5v2h-5zM1342 623h9v2h-9zM1352 623h1v2h-1zM1354 623h1v2h-1zM1356 623h3v2h-3zM1327 627h6v2h-6zM1334 627h7v2h-7zM1342 627h4v2h-4zM1332 631h8v2h-8zM1341 631h3v2h-3zM1345 631h9v2h-9zM1327 635h6v2h-6zM1334 635h7v2h-7zM1354 635h5v2h-5zM1360 635h10v2h-10zM1332 637h4v2h-4zM1337 637h3v2h-3zM1341 637h4v2h-4zM1346 637h4v2h-4zM1351 637h3v2h-3zM1355 637h4v2h-4zM1360 637h2v2h-2zM1363 637h4v2h-4zM1368 637h6v2h-6zM1375 637h4v2h-4zM1380 637h9v2h-9zM1390 637h9v2h-9zM1327 647h6v2h-6zM1334 647h3v2h-3zM1348 649h6v2h-6zM1355 649h3v2h-3zM1360 649h2v2h-2zM1332 653h5v2h-5zM1338 653h5v2h-5zM1344 653h2v2h-2zM1347 653h7v2h-7zM1342 657h22v2h-22zM1365 657h1v2h-1zM1367 657h4v2h-4zM1372 657h1v2h-1zM1374 657h7v2h-7zM1395 657h2v2h-2zM1327 661h8v2h-8zM1348 661h5v2h-5zM1354 661h1v2h-1zM1356 661h6v2h-6zM1340 663h7v2h-7zM1348 663h6v2h-6zM1355 663h1v2h-1zM1358 663h9v2h-9zM1327 667h9v2h-9zM1343 669h10v2h-10zM1355 669h4v2h-4zM1327 673h11v2h-11zM1351 673h7v2h-7zM1332 675h13v2h-13zM1342 677h9v2h-9zM1352 677h1v2h-1zM1354 677h2v2h-2zM1327 681h4v2h-4zM1332 681h4v2h-4zM1349 681h5v2h-5zM1355 681h4v2h-4zM1332 683h5v2h-5zM1338 683h4v2h-4zM1343 683h3v2h-3zM1347 683h3v2h-3zM1351 683h11v2h-11zM1363 683h3v2h-3zM1367 683h6v2h-6zM1374 683h6v2h-6zM1381 683h9v2h-9zM1343 687h10v2h-10zM1355 687h4v2h-4zM1327 691h6v2h-6zM1334 691h1v2h-1zM1336 691h5v2h-5zM1332 693h5v2h-5zM1338 693h6v2h-6zM1345 693h1v2h-1zM1347 693h6v2h-6zM1354 693h4v2h-4zM1338 697h12v2h-12zM1352 697h3v2h-3zM1332 699h5v2h-5zM1338 699h6v2h-6zM1345 699h1v2h-1zM1347 699h7v2h-7zM1355 699h4v2h-4zM1360 699h3v2h-3zM1364 699h5v2h-5zM1329 703h5v2h-5zM1346 703h6v2h-6zM1373 705h2v2h-2zM1376 705h3v2h-3zM1380 705h3v2h-3zM1384 705h2v2h-2zM1341 709h1v2h-1zM1343 709h2v2h-2zM1346 709h1v2h-1zM1327 719h5v2h-5zM1333 719h5v2h-5zM1332 721h8v2h-8zM1341 721h6v2h-6zM1338 723h12v2h-12zM1352 723h3v2h-3zM1327 731h7v2h-7zM1335 731h10v2h-10zM1332 733h6v2h-6zM1339 733h11v2h-11zM1351 733h4v2h-4zM1356 733h6v2h-6zM1363 733h7v2h-7zM1371 733h4v2h-4zM1376 733h4v2h-4zM1381 733h4v2h-4zM1386 733h3v2h-3zM1390 733h10v2h-10zM1401 733h4v2h-4zM1332 735h2v2h-2zM1335 735h3v2h-3zM1339 735h5v2h-5zM1345 735h9v2h-9zM1355 735h5v2h-5zM1336 741h10v2h-10zM1348 741h4v2h-4zM1363 745h16v2h-16zM1327 761h8v2h-8zM1332 767h7v2h-7zM1340 767h1v2h-1zM1342 767h5v2h-5zM1348 767h1v2h-1zM1350 767h2v2h-2zM1353 767h4v2h-4zM1358 767h7v2h-7zM1366 767h7v2h-7zM1327 773h9v2h-9zM1336 781h4v2h-4zM1341 781h4v2h-4zM1337 783h30v2h-30zM1368 783h1v2h-1zM1370 783h4v2h-4zM1375 783h1v2h-1zM1377 783h3v2h-3zM1381 783h1v2h-1zM1383 783h9v2h-9zM1332 785h1v2h-1zM1334 785h4v2h-4zM1339 785h4v2h-4zM1344 785h1v2h-1zM1332 787h5v2h-5zM1338 787h4v2h-4zM1343 787h1v2h-1zM1345 787h1v2h-1zM1352 791h6v2h-6zM1359 791h2v2h-2zM1374 791h3v2h-3zM1378 791h2v2h-2zM1331 799h6v2h-6zM1342 799h5v2h-5zM1336 801h6v2h-6zM1354 803h6v2h-6zM1351 805h10v2h-10zM1350 807h10v2h-10zM1336 809h9v2h-9zM1357 811h13v2h-13zM1336 813h1v2h-1zM1338 813h11v2h-11zM1350 813h3v2h-3zM1354 813h6v2h-6zM1361 813h5v2h-5zM1367 813h1v2h-1zM1369 813h1v2h-1zM1336 815h1v2h-1zM1338 815h11v2h-11zM1350 815h8v2h-8zM1359 815h3v2h-3zM1363 815h3v2h-3zM1367 815h5v2h-5zM1373 815h2v2h-2zM1336 817h1v2h-1zM1338 817h8v2h-8zM1347 817h3v2h-3zM1351 817h11v2h-11zM1363 817h1v2h-1zM1365 817h1v2h-1zM1336 819h1v2h-1zM1338 819h11v2h-11zM1350 819h1v2h-1zM1352 819h1v2h-1zM1336 825h1v2h-1zM1338 825h4v2h-4zM1343 825h3v2h-3zM1347 825h5v2h-5zM1353 825h1v2h-1zM1327 829h5v2h-5zM1333 829h7v2h-7zM1341 829h1v2h-1zM1340 833h8v2h-8zM1349 833h3v2h-3zM1353 833h4v2h-4zM1339 835h5v2h-5zM1345 835h6v2h-6z"/><path fill="#b5cea8" d="M1349 135h1v2h-1zM1329 155h1v2h-1zM1342 155h2v2h-2zM1331 161h2v2h-2zM1345 161h2v2h-2zM1342 225h1v2h-1zM1358 259h3v2h-3zM1371 307h1v2h-1zM1378 351h1v2h-1zM1355 489h1v2h-1zM1369 555h2v2h-2zM1373 555h1v2h-1zM1401 555h1v2h-1zM1334 579h1v2h-1zM1339 599h1v2h-1zM1337 663h1v2h-1zM1337 685h1v2h-1zM1342 727h1v2h-1zM1379 749h7v2h-7zM1383 751h4v2h-4zM1391 751h1v2h-1zM1354 811h1v2h-1z"/><path fill="#569cd6" d="M1314 141h3v2h-3zM1314 151h3v2h-3zM1331 155h3v2h-3zM1334 161h3v2h-3zM1314 185h3v2h-3zM1314 213h3v2h-3zM1314 257h3v2h-3zM1326 281h6v2h-6zM1324 293h4v2h-4zM1349 341h2v2h-2zM1343 425h2v2h-2zM1355 449h2v2h-2zM1351 467h2v2h-2zM1345 501h2v2h-2zM1363 629h5v2h-5zM1384 629h5v2h-5zM1397 629h4v2h-4zM1351 635h2v2h-2zM1345 661h2v2h-2zM1348 673h2v2h-2zM1346 681h2v2h-2zM1343 703h2v2h-2zM1355 737h4v2h-4z"/><path fill="#dcdcaa" d="M1318 141h5v2h-5zM1318 151h6v2h-6zM1318 185h8v2h-8zM1318 213h11v2h-11zM1318 257h9v2h-9z"/><path fill="#4ec9b0" d="M1325 153h3v2h-3zM1340 593h3v2h-3zM1340 597h3v2h-3zM1336 605h3v2h-3zM1330 639h3v2h-3zM1345 745h3v2h-3zM1373 813h3v2h-3zM1378 815h3v2h-3zM1369 817h3v2h-3zM1356 819h3v2h-3z"/><path fill="#6a9955" d="M1318 173h9v2h-9zM1328 173h1v2h-1zM1330 173h10v2h-10zM1318 175h14v2h-14zM1333 175h2v2h-2zM1336 175h9v2h-9zM1318 267h1v2h-1zM1320 267h6v2h-6zM1327 267h3v2h-3zM1331 267h8v2h-8zM1340 267h2v2h-2zM1343 267h5v2h-5zM1322 759h1v2h-1zM1324 759h29v2h-29zM1326 777h1v2h-1zM1328 777h6v2h-6zM1335 777h4v2h-4zM1340 777h7v2h-7zM1348 777h7v2h-7zM1326 779h1v2h-1zM1328 779h2v2h-2zM1331 779h3v2h-3zM1335 779h3v2h-3zM1339 779h2v2h-2zM1342 779h4v2h-4zM1347 779h7v2h-7zM1326 831h1v2h-1zM1328 831h3v2h-3zM1332 831h4v2h-4zM1337 831h2v2h-2zM1340 831h6v2h-6zM1347 831h2v2h-2zM1350 831h7v2h-7zM1358 831h2v2h-2zM1361 831h6v2h-6zM1368 831h2v2h-2zM1371 831h3v2h-3zM1375 831h4v2h-4zM1380 831h7v2h-7z"/></g></svg><!--/MM-->
<div class="abs" style="left:1179px;top:0;width:14px;height:751px;border-left:1px solid #3a3a3a;border-top:1px solid #3a3a3a"></div>
<div class="abs" style="left:1179px;top:33px;width:14px;height:62px;background:rgba(121,121,121,0.4)"></div>
<div class="abs" style="left:1180px;top:60px;width:13px;height:2px;background:#a0a0a0"></div>
<div class="abs" style="left:0;top:0;width:1059px;height:4px;background:linear-gradient(#0b0b0b,rgba(30,30,30,0))"></div>
</div>
<div id="status" class="abs">
<div class="sb" style="left:0;width:34px;background:#16825d"><svg class="abs" style="left:10px;top:4px" width="14" height="14" viewBox="0 0 14 14" fill="none" stroke="#fff" stroke-width="1.2"><path d="M2 12l4-4-2.5-2.5M12 2L8 6l2.5 2.5"/></svg></div>
<svg class="abs" style="left:42px;top:4px" width="14" height="14" viewBox="0 0 14 14" fill="none" stroke="#fff" stroke-width="1.1"><circle cx="7" cy="7" r="5.8"/><path d="M4.6 4.6l4.8 4.8M9.4 4.6l-4.8 4.8"/></svg>
<span class="sb" style="top:1px;left:59px">0</span>
<svg class="abs" style="left:69px;top:4px" width="14" height="14" viewBox="0 0 14 14" fill="none" stroke="#fff" stroke-width="1.1"><path d="M7 1.5l6 11H1z"/><path d="M7 5.5v3.5M7 10.2v1"/></svg>
<span class="sb" style="top:1px;left:86px">0</span>
<svg class="abs" style="left:108px;top:4px" width="14" height="14" viewBox="0 0 14 14" fill="none" stroke="#fff" stroke-width="1.3"><path d="M2.5 7a4.5 4.5 0 0 1 8-2.8M11.5 7a4.5 4.5 0 0 1-8 2.8"/><path d="M10.8 1.8v2.6H8.2M3.2 12.2V9.6h2.6"/></svg>
<span class="sb" style="top:1px;left:126px;letter-spacing:-0.05px">Discovering Python Interpreters</span>
<svg class="abs" style="left:309px;top:5px" width="12" height="12" viewBox="0 0 12 12" fill="none" stroke="#fff" stroke-width="1.2"><path d="M6 1l4.4 2.5v5L6 11 1.6 8.5v-5z"/><path d="M4 4.5l3.5 .5v3" stroke-width="1"/></svg>
<span class="sb" style="top:1px;left:324px">tabnine starter</span>
<span class="sb" style="top:1px;left:707px">Ln 39, Col 32</span>
<span class="sb" style="top:1px;left:791px;letter-spacing:-0.3px">Spaces: 4</span>
<span class="sb" style="top:1px;left:856px">UTF-8</span>
<span class="sb" style="top:1px;left:903px">CRLF</span>
<svg class="abs" style="left:944px;top:4px" width="16" height="14" viewBox="944 842 16 14" fill="none" stroke="#fff" stroke-width="1.1"><path d="M949.5 844.2c-1.2 0-1.8.6-1.8 1.6v1.6c0 .9-.5 1.3-1.1 1.4.6.1 1.1.5 1.1 1.4v1.6c0 1 .6 1.6 1.8 1.6"/><path d="M952.8 844.2c1 .3 1.8 1.2 1.9 2.4l.2 3"/><circle cx="955" cy="852.3" r="2.1" fill="#fff" stroke="none"/></svg>
<span class="sb" style="top:1px;left:964px">Python</span>
<span class="sb" style="top:1px;left:1017px">3.9.7 ('base': conda)</span>
<svg class="abs" style="left:1136px;top:4px" width="14" height="14" viewBox="0 0 14 14" fill="none" stroke="#fff" stroke-width="1.1"><circle cx="7" cy="6" r="1.6" fill="#fff"/><path d="M4.2 9a4 4 0 1 1 5.6 0M2.5 10.8a6.3 6.3 0 1 1 9 0M7 8v5"/></svg>
<span class="sb" style="top:1px;left:1155px">Go Live</span>
<span class="sb" style="top:1px;left:1210px;font-family:'Liberation Serif',serif;font-weight:bold;font-size:13px;letter-spacing:-0.4px">kite</span>
<span class="sb" style="top:1px;left:1233px">: initializing</span>
<svg class="abs" style="left:1308px;top:4px" width="14" height="14" viewBox="0 0 14 14" fill="none" stroke="#fff" stroke-width="1.2"><circle cx="7" cy="7" r="5.7"/><path d="M3 11L11 3"/></svg>
<span class="sb" style="top:1px;left:1326px">Prettier</span>
<svg class="abs" style="left:1380px;top:4px" width="14" height="14" viewBox="0 0 14 14" fill="none" stroke="#fff" stroke-width="1.1"><path d="M6 1.5h7v6h-2.5l-2 2"/><circle cx="5" cy="7" r="2.2"/><path d="M1 13c.5-2.2 2-3.5 4-3.5s3.5 1.3 4 3.5"/></svg>
<svg class="abs" style="left:1410px;top:4px" width="14" height="14" viewBox="0 0 14 14" fill="none" stroke="#fff" stroke-width="1.1"><path d="M3 10.5V6.5a4 4 0 0 1 6-3.4M11 6.5v4M2 10.5h10M5.5 12.5h3"/><circle cx="11" cy="3.5" r="2.2" fill="#fff" stroke="none"/></svg>
</div>
<div id="taskbar" class="abs">
<svg class="abs" style="left:0;top:0" width="48" height="40" viewBox="0 860 48 40" fill="#ffffff"><path d="M15.8 873L22 872.1V878.8H15.8zM23 872L32 870.8V878.8H23zM15.8 879.8H22V886.9L15.8 886.1zM23 879.8H32V888.1L23 887z"/></svg>
<div class="abs" style="left:48px;top:1px;width:344px;height:39px;background:#f0f0f0"></div>
<svg class="abs" style="left:48px;top:0" width="40" height="40" viewBox="48 860 40 40" fill="none" stroke="#1a1a1a" stroke-width="1.3"><circle cx="70.3" cy="877.3" r="5.6"/><path d="M66.3 881.3L60.5 887.7"/></svg>
<span class="abs" style="left:88px;top:871px;font-size:14.6px;color:#333333;line-height:18px;top:11px">Type here to search</span>
<svg class="abs" style="left:392px;top:0" width="1048" height="40" viewBox="392 860 1048 40">
<circle cx="416.1" cy="880" r="6.7" fill="none" stroke="#ffffff" stroke-width="2.1"/>
<g fill="none" stroke="#ffffff" stroke-width="1"><path d="M456.6 872v2.6h9.6V872M456.6 887v-2.6h9.6V887"/><rect x="456.6" y="876.9" width="9.6" height="5.6"/><path d="M470.3 872v16"/></g><rect x="469" y="876.4" width="2.8" height="2.6" fill="#fff"/>
<path d="M503 873l12-4.5 12 4.5v17.5h-24z" fill="#1a73c9"/><path d="M503 875h24v15.5h-24z" fill="#2aa3f0"/><path d="M504 875.5l11 7 11-7z" fill="#f2f2f2"/>
<rect x="518" y="878.5" width="20" height="17" rx="8.5" fill="#2b2b2b" stroke="#9a9a9a" stroke-width="1"/>
<text x="528" y="892" text-anchor="middle" font-family="Liberation Sans" font-size="12" font-weight="bold" fill="#ffffff">86</text>
<defs><linearGradient id="eg" x1="0" y1="0" x2="1" y2="0.5"><stop offset="0" stop-color="#2ec6f2"/><stop offset="0.55" stop-color="#33c2c0"/><stop offset="1" stop-color="#6de04c"/></linearGradient></defs>
<circle cx="564" cy="880" r="12" fill="url(#eg)"/>
<path d="M552 880c0-2.5.7-4 1.5-4.5 2.5-1.8 6-2 9-1 2 .7 3 2 3 2.5l-4 3.5 3 5.5 8.5 2.2c-2 3.5-6 5.8-9 5.8h-1c-6.5 0-11-5.5-11-11.5z" fill="#1285d8"/>
<path d="M559.6 879.8c-1.2 4.5.5 10.5 6.5 11.8 3.8-.2 7-2.2 9-5-3 1.3-7 1.3-10-1.2-2.3-2-3.3-4.2-3.2-6.2z" fill="#0b5aa8"/>
<ellipse cx="563.6" cy="879.8" rx="3" ry="3.2" fill="#1b1a23"/>
<path d="M564.5 882.8c2.5 2.8 6.5 3.8 11 2.8l-.4 1.2c-4.5 1.8-9 .8-12-2z" fill="#1b1a23"/>
<rect x="544" y="898" width="40" height="2" fill="#76b9ed"/>
<path d="M605 871.5a2.5 2.5 0 0 1 2.5-2.5h9a2.5 2.5 0 0 1 2.5 2.5v3" fill="none" stroke="#29b6f6" stroke-width="1.8"/>
<rect x="601" y="872.7" width="23" height="19.3" rx="2.5" fill="#f5f5f5"/>
<rect x="607.8" y="878" width="4.5" height="4.3" fill="#f25022"/><rect x="613" y="878" width="4.5" height="4.3" fill="#7fba00"/><rect x="607.8" y="883" width="4.5" height="4.3" fill="#00a4ef"/><rect x="613" y="883" width="4.5" height="4.3" fill="#ffb900"/>
<defs><linearGradient id="og" x1="0" y1="0" x2="0" y2="1"><stop offset="0" stop-color="#b5121b"/><stop offset="0.6" stop-color="#de2a36"/><stop offset="1" stop-color="#cf5fb0"/></linearGradient><linearGradient id="og2" x1="0" y1="0" x2="0" y2="1"><stop offset="0" stop-color="#f7a20a"/><stop offset="0.45" stop-color="#e2520a"/><stop offset="1" stop-color="#ee4a10"/></linearGradient></defs>
<path d="M653 874L663.5 869.2V873.6L657.3 875.8V884.6L653 886z" fill="url(#og)"/>
<path d="M656 886.4L663.5 885.6V891.2z" fill="#e8243c"/>
<path d="M663.5 869L670.3 871.3V888.2L663.5 891z" fill="url(#og2)"/>
<rect x="704.8" y="869" width="18.2" height="21.5" rx="1" fill="#2b7cd3"/><rect x="704.8" y="869" width="18.2" height="5.5" fill="#41a5ee"/><rect x="704.8" y="885" width="18.2" height="5.5" fill="#185abd"/>
<rect x="699" y="874" width="12" height="12" rx="1" fill="#185abd"/><text x="705" y="884.5" text-anchor="middle" font-family="Liberation Sans" font-size="10" font-weight="bold" fill="#fff">W</text>
<path d="M749 871.5h8l2 2h11.6v15h-21.6z" fill="#f8c43a"/><path d="M749 875.5h21.6v13h-21.6z" fill="#fad66b"/>
<path d="M753.5 881h13v7.5h-3v-4.5h-7v4.5h-3z" fill="#3d8fd6"/>
<rect x="740" y="898" width="31" height="2" fill="#76b9ed"/><rect x="772" y="898" width="8" height="2" fill="#5a8fbf"/>
<rect x="785" y="860" width="48" height="40" fill="#47464d"/>
<rect x="785" y="898" width="48" height="2" fill="#76b9ed"/>
<g transform="translate(797 868) scale(0.245)"><defs><clipPath id="vr"><rect x="68" y="0" width="40" height="100"/></clipPath></defs><path fill="#0f78c8" d="M96.46 10.8L75.86.87a6.23 6.23 0 0 0-7.1 1.2L29.35 38.04 12.19 25.01a4.16 4.16 0 0 0-5.32.24L1.36 30.26a4.16 4.16 0 0 0 0 6.16L16.25 50 1.36 63.58a4.16 4.16 0 0 0 0 6.16l5.51 5a4.16 4.16 0 0 0 5.32.24l17.16-13.02 39.41 35.960a6.23 6.23 0 0 0 7.1 1.2l20.6-9.92A6.24 6.24 0 0 0 100 83.6V16.4a6.24 6.24 0 0 0-3.54-5.6zM75.02 72.7L45.11 50l29.9-22.7z"/><path fill="#24a3ee" clip-path="url(#vr)" d="M96.46 10.8L75.86.87a6.23 6.23 0 0 0-7.1 1.2L29.35 38.04 12.19 25.01a4.16 4.16 0 0 0-5.32.24L1.36 30.26a4.16 4.16 0 0 0 0 6.16L16.25 50 1.36 63.58a4.16 4.16 0 0 0 0 6.16l5.51 5a4.16 4.16 0 0 0 5.32.24l17.16-13.02 39.41 35.960a6.23 6.23 0 0 0 7.1 1.2l20.6-9.92A6.24 6.24 0 0 0 100 83.6V16.4a6.24 6.24 0 0 0-3.54-5.6zM75.02 72.7L45.11 50l29.9-22.7z"/></g>
<defs><radialGradient id="sg" cx="0.3" cy="0.25" r="0.9"><stop offset="0" stop-color="#fdc02f"/><stop offset="1" stop-color="#f06a1a"/></radialGradient></defs>
<circle cx="1030" cy="880" r="10" fill="url(#sg)"/><circle cx="1039" cy="871" r="3" fill="#d8282a"/>
<path d="M1142.5 884l6-6 6 6" fill="none" stroke="#fff" stroke-width="1.3"/>
<g fill="none" stroke="#fff" stroke-width="1.3"><rect x="1168" y="876" width="9" height="8" rx="1.5"/><path d="M1177 878.5l3-2v7l-3-2M1168.5 873.5c2-1.5 6-1.5 8 0M1168.5 886.5c2 1.5 6 1.5 8 0"/></g>
<path d="M1189 884.5c-1.5 0-2.6-1-2.6-2.4 0-1.3 1-2.3 2.3-2.4.6-2.2 2.5-3.6 4.6-3.6 1.8 0 3.3 1 4.1 2.4 2.3-.3 4.2 1.5 4.2 3.6 0 1.3-1.1 2.4-2.5 2.4z" fill="#e0e0e0"/>
<g fill="none" stroke="#fff" stroke-width="1.4"><rect x="1214.5" y="876.3" width="13.5" height="8.2"/></g><rect x="1216.5" y="878.3" width="6" height="4.2" fill="#fff"/><rect x="1228.3" y="878.5" width="1.4" height="4" fill="#fff"/>
<g fill="none" stroke="#fff" stroke-width="1.1"><path d="M1241 885.5a10 10 0 0 1 10-10M1243.5 885.5a7.5 7.5 0 0 1 7.5-7.5M1246 885.5a5 5 0 0 1 5-5"/></g><circle cx="1250.5" cy="885" r="1.3" fill="#fff"/>
<g fill="none" stroke="#fff" stroke-width="1.1"><path d="M1261.5 877.5h3l4.5-3.5v12l-4.5-3.5h-3z"/><path d="M1271 878a3 3 0 0 1 0 4M1273.3 876.2a6 6 0 0 1 0 7.6M1275.5 874.5a9 9 0 0 1 0 11"/></g>
<path d="M1399 872h16.2v13h-6.5l-2.5 2.5-2.5-2.5h-4.7z" fill="#fff"/><path d="M1402 875.5h10M1402 878.5h10M1402 881.5h6" stroke="#1b1a23" stroke-width="0.9"/>
<circle cx="1414.5" cy="887" r="8" fill="#2b2b2b" stroke="#9a9a9a" stroke-width="1"/>
<text x="1414.5" y="891.5" text-anchor="middle" font-family="Liberation Sans" font-size="12" font-weight="bold" fill="#ffffff">4</text>
<rect x="1435" y="860" width="1" height="40" fill="#5a5a5a"/>
</svg>
<span class="abs" style="left:1050px;top:12px;font-size:14.2px;line-height:18px;color:#fff;letter-spacing:-0.5px">20°C</span>
<span class="abs" style="left:1088px;top:12px;font-size:14.2px;line-height:18px;color:#fff;letter-spacing:-0.35px">Sunny</span>
<span class="abs" style="left:1287px;top:11px;font-size:12px;line-height:18px;color:#fff;letter-spacing:-0.4px">ENG</span>
<span class="abs" style="left:1339px;top:3px;font-size:12px;line-height:16px;color:#fff;letter-spacing:-0.6px">17:47</span>
<span class="abs" style="left:1322px;top:21px;font-size:12px;line-height:16px;color:#fff;letter-spacing:-0.1px">2023/01/05</span>
</div>
</body></html>
